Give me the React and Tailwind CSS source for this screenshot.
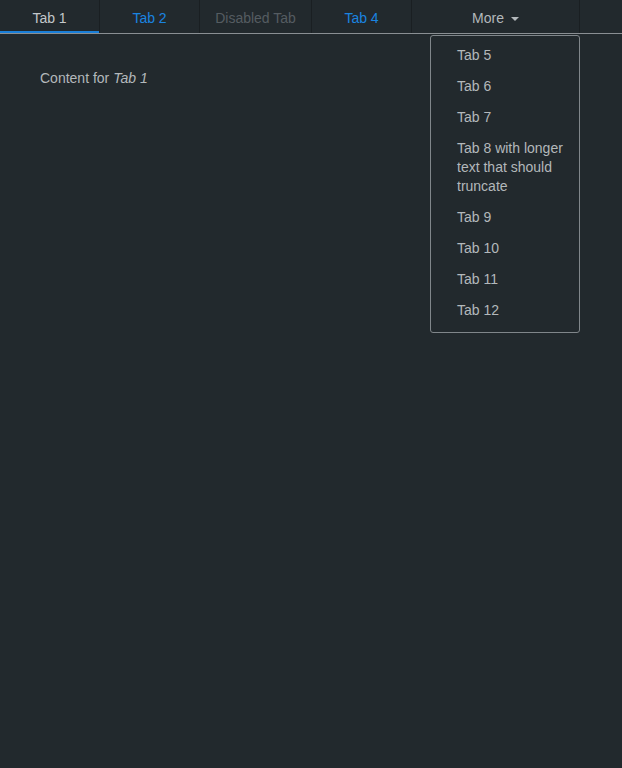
import React from "react";

export default function App() {
  const items = ["Tab 5", "Tab 6", "Tab 7", "Tab 8 with longer text that should truncate", "Tab 9", "Tab 10", "Tab 11", "Tab 12"];
  return (
    <div className="min-h-[768px] w-full bg-[#22292d] text-[14px] leading-[19px]" style={{ fontFamily: '"Liberation Sans", Arial, sans-serif' }}>
      <div className="relative flex h-[34px] border-b border-[#8a8f93]">
        <div className="relative flex w-[100px] items-center justify-center border-r border-[#1a1f22] pt-[3px] text-[#c3c7ca]">
          Tab 1
          <div className="absolute bottom-0 left-0 h-[2px] w-[99px] bg-[#1a7fd8]"></div>
        </div>
        <div className="flex w-[100px] items-center justify-center border-r border-[#1a1f22] pt-[3px] text-[#1a84e0]">Tab 2</div>
        <div className="flex w-[112px] items-center justify-center border-r border-[#1a1f22] pt-[3px] text-[#555c61]">Disabled Tab</div>
        <div className="flex w-[100px] items-center justify-center border-r border-[#1a1f22] pt-[3px] text-[#1a84e0]">Tab 4</div>
        <div className="relative flex w-[168px] items-center justify-center border-r border-[#1a1f22] pt-[3px] text-[#b3b8bb]">
          <span>More</span>
          <svg className="ml-[7px] mt-[2px]" width="8" height="4" viewBox="0 0 8 4"><path d="M0 0 L8 0 L4 4 Z" fill="#b3b8bb" /></svg>
          <div className="absolute left-[18px] top-[35px] z-10 w-[150px] rounded-[3px] border border-[#80868a] bg-[#22292d] pb-[6px] pt-[4px]">
            {items.map((t) => (
              <div key={t} className="py-[6px] pl-[26px] pr-[14px] text-[#b3b8bb]">{t}</div>
            ))}
          </div>
        </div>
      </div>
      <div className="px-[40px] pt-[35px] text-[#b3b8bb]">
        Content for <em>Tab 1</em>
      </div>
    </div>
  );
}
